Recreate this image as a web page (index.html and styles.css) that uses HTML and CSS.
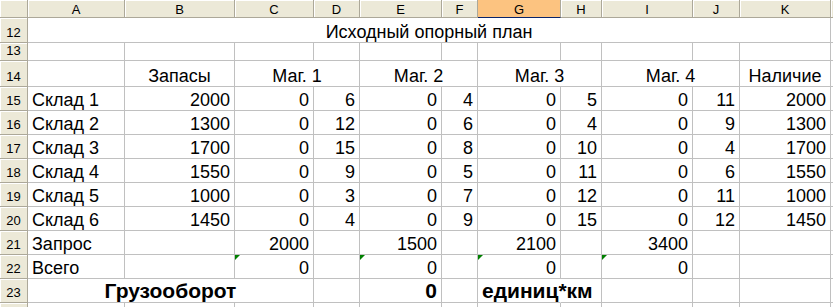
FILE: index.html
```html
<!DOCTYPE html>
<html lang="ru">
<head>
<meta charset="utf-8">
<title>Исходный опорный план</title>
<link rel="stylesheet" href="styles.css">
</head>
<body>
<div class="sheet">
  <!-- column headers -->
  <div class="h corner"></div>
  <div class="h">A</div>
  <div class="h">B</div>
  <div class="h">C</div>
  <div class="h">D</div>
  <div class="h">E</div>
  <div class="h">F</div>
  <div class="h sel">G</div>
  <div class="h">H</div>
  <div class="h">I</div>
  <div class="h">J</div>
  <div class="h">K</div>
  <div class="h edge"></div>

  <!-- row 12 -->
  <div class="rn">12</div>
  <div class="c ctr s11">Исходный опорный план</div>
  <div class="x"></div>

  <!-- row 13 -->
  <div class="rn">13</div>
  <div class="c"></div><div class="c"></div><div class="c"></div><div class="c"></div><div class="c"></div><div class="c"></div><div class="c"></div><div class="c"></div><div class="c"></div><div class="c"></div><div class="c"></div>
  <div class="x"></div>

  <!-- row 14 -->
  <div class="rn">14</div>
  <div class="c"></div>
  <div class="c ctr">Запасы</div>
  <div class="c ctr s2">Маг. 1</div>
  <div class="c ctr s2">Маг. 2</div>
  <div class="c ctr s2">Маг. 3</div>
  <div class="c ctr s2">Маг. 4</div>
  <div class="c ctr">Наличие</div>
  <div class="x"></div>

  <!-- row 15 -->
  <div class="rn">15</div>
  <div class="c">Склад 1</div>
  <div class="c r">2000</div>
  <div class="c r">0</div><div class="c r">6</div>
  <div class="c r">0</div><div class="c r">4</div>
  <div class="c r">0</div><div class="c r">5</div>
  <div class="c r">0</div><div class="c r">11</div>
  <div class="c r">2000</div>
  <div class="x"></div>

  <!-- row 16 -->
  <div class="rn">16</div>
  <div class="c">Склад 2</div>
  <div class="c r">1300</div>
  <div class="c r">0</div><div class="c r">12</div>
  <div class="c r">0</div><div class="c r">6</div>
  <div class="c r">0</div><div class="c r">4</div>
  <div class="c r">0</div><div class="c r">9</div>
  <div class="c r">1300</div>
  <div class="x"></div>

  <!-- row 17 -->
  <div class="rn">17</div>
  <div class="c">Склад 3</div>
  <div class="c r">1700</div>
  <div class="c r">0</div><div class="c r">15</div>
  <div class="c r">0</div><div class="c r">8</div>
  <div class="c r">0</div><div class="c r">10</div>
  <div class="c r">0</div><div class="c r">4</div>
  <div class="c r">1700</div>
  <div class="x"></div>

  <!-- row 18 -->
  <div class="rn">18</div>
  <div class="c">Склад 4</div>
  <div class="c r">1550</div>
  <div class="c r">0</div><div class="c r">9</div>
  <div class="c r">0</div><div class="c r">5</div>
  <div class="c r">0</div><div class="c r">11</div>
  <div class="c r">0</div><div class="c r">6</div>
  <div class="c r">1550</div>
  <div class="x"></div>

  <!-- row 19 -->
  <div class="rn">19</div>
  <div class="c">Склад 5</div>
  <div class="c r">1000</div>
  <div class="c r">0</div><div class="c r">3</div>
  <div class="c r">0</div><div class="c r">7</div>
  <div class="c r">0</div><div class="c r">12</div>
  <div class="c r">0</div><div class="c r">11</div>
  <div class="c r">1000</div>
  <div class="x"></div>

  <!-- row 20 -->
  <div class="rn">20</div>
  <div class="c">Склад 6</div>
  <div class="c r">1450</div>
  <div class="c r">0</div><div class="c r">4</div>
  <div class="c r">0</div><div class="c r">9</div>
  <div class="c r">0</div><div class="c r">15</div>
  <div class="c r">0</div><div class="c r">12</div>
  <div class="c r">1450</div>
  <div class="x"></div>

  <!-- row 21 -->
  <div class="rn">21</div>
  <div class="c">Запрос</div>
  <div class="c"></div>
  <div class="c r">2000</div><div class="c"></div>
  <div class="c r">1500</div><div class="c"></div>
  <div class="c r">2100</div><div class="c"></div>
  <div class="c r">3400</div><div class="c"></div>
  <div class="c"></div>
  <div class="x"></div>

  <!-- row 22 -->
  <div class="rn">22</div>
  <div class="c">Всего</div>
  <div class="c"></div>
  <div class="c r"><span class="tri"></span>0</div><div class="c"></div>
  <div class="c r"><span class="tri"></span>0</div><div class="c"></div>
  <div class="c r"><span class="tri"></span>0</div><div class="c"></div>
  <div class="c r"><span class="tri"></span>0</div><div class="c"></div>
  <div class="c"></div>
  <div class="x"></div>

  <!-- row 23 -->
  <div class="rn">23</div>
  <div class="c ctr b s3">Грузооборот</div>
  <div class="c"></div>
  <div class="c r b">0</div>
  <div class="c"></div>
  <div class="c b spill">единиц*км</div>
  <div class="c"></div>
  <div class="c"></div>
  <div class="c"></div>
  <div class="c"></div>
  <div class="x"></div>

  <!-- row 24 (partial) -->
  <div class="rn"></div>
  <div class="c"></div><div class="c"></div><div class="c"></div><div class="c"></div><div class="c"></div><div class="c"></div><div class="c"></div><div class="c"></div><div class="c"></div><div class="c"></div><div class="c"></div>
  <div class="x"></div>
</div>
</body>
</html>
```

FILE: styles.css
```css
html, body {
  margin: 0;
  padding: 0;
  background: #ffffff;
}

.sheet {
  display: grid;
  grid-template-columns: 28px 97px 110px 79px 46px 82px 36px 83px 41px 91px 47px 91px 2px;
  grid-template-rows: 18px 25px 18px 26px repeat(9, 24px) 5px;
  width: 833px;
  height: 307px;
  overflow: hidden;
  font-family: "Liberation Sans", Arial, sans-serif;
  color: #000000;
}

.sheet > div {
  box-sizing: border-box;
  min-width: 0;
}

/* column headers */
.h {
  background: #ece9d8;
  border-right: 1px solid #aca899;
  border-bottom: 1px solid #aca899;
  box-shadow: inset 1px 1px 0 #ffffff;
  font-size: 13px;
  line-height: 15px;
  display: flex;
  align-items: center;
  justify-content: center;
  padding-top: 1px;
}

.h.sel {
  background: #fcc380;
  border-bottom: 1px solid #0a246a;
  box-shadow: none;
}

.h.edge {
  border-right: none;
}

/* row numbers */
.rn {
  background: #ece9d8;
  border-right: 1px solid #aca899;
  border-bottom: 1px solid #aca899;
  box-shadow: inset 1px 1px 0 #ffffff;
  font-size: 13px;
  line-height: 15px;
  display: flex;
  align-items: flex-end;
  justify-content: center;
  padding-bottom: 2px;
}

/* cells */
.c {
  position: relative;
  border-right: 1px solid #c0c0c0;
  border-bottom: 1px solid #c0c0c0;
  font-size: 18px;
  line-height: 20px;
  display: flex;
  align-items: flex-end;
  justify-content: flex-start;
  padding: 0 4px 0 4px;
  white-space: nowrap;
}

.x {
  border-bottom: 1px solid #c0c0c0;
}

.r { justify-content: flex-end; }
.ctr { justify-content: center; }
.b {
  font-weight: bold;
  font-size: 21px;
  line-height: 22px;
}

.s2 { grid-column: span 2; }
.s3 { grid-column: span 3; }
.s11 { grid-column: span 11; }

.spill {
  overflow: visible;
  border-right-color: transparent;
  z-index: 1;
}

/* error indicator */
.tri {
  position: absolute;
  top: 0;
  left: 0;
  width: 0;
  height: 0;
  border-top: 5px solid #008000;
  border-right: 5px solid transparent;
}
```
